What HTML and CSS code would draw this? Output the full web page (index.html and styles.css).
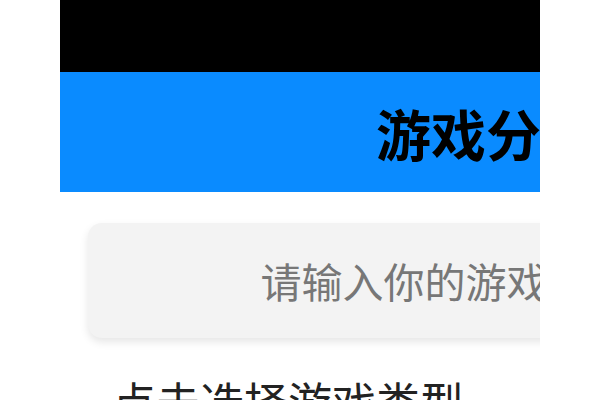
FILE: index.html
```html
<!DOCTYPE html>
<html lang="zh">
<head>
<meta charset="utf-8">
<link rel="stylesheet" href="styles.css">
</head>
<body>
<div class="frame">
  <div class="page">
    <div class="statusbar"></div>
    <div class="header">游戏分类</div>
    <div class="search">请输入你的游戏名称搜索</div>
    <div class="section-title">点击选择游戏类型</div>
  </div>
</div>
</body>
</html>
```
FILE: styles.css
```css
html, body {
  margin: 0;
  padding: 0;
  background: #fff;
}
body {
  font-family: "Noto Sans CJK SC", "Noto Sans", sans-serif;
}
.frame {
  width: 480px;
  height: 400px;
  margin: 0 auto;
  overflow: hidden;
  background: #fff;
}
.page {
  width: 852px;
}
.statusbar {
  height: 72px;
  background: #000;
}
.header {
  height: 120px;
  line-height: 120px;
  background: #0a8bff;
  color: #000;
  font-size: 55px;
  font-weight: 700;
  text-align: center;
}
.search {
  margin: 31px 28px 0;
  height: 115px;
  line-height: 115px;
  border-radius: 14px;
  background: #f3f3f3;
  box-shadow: 0 4px 8px rgba(0, 0, 0, 0.1);
  color: #777;
  font-size: 41px;
  text-align: center;
}
.section-title {
  margin-top: 41px;
  padding-left: 52px;
  font-size: 44px;
  line-height: 44px;
  color: #222;
}
```
